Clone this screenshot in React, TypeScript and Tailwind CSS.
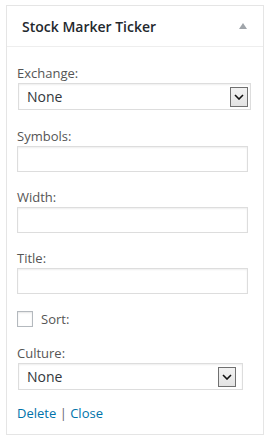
import React from "react";

const font = { fontFamily: '"Open Sans", "Liberation Sans", sans-serif' };

const Chevron: React.FC = () => (
  <svg width="10" height="6" viewBox="0 0 10 6" fill="none">
    <path d="M1 1l4 4 4-4" stroke="#111" strokeWidth="1.6" />
  </svg>
);

const FakeSelect: React.FC<{ width: string; pad: string }> = ({ width, pad }) => (
  <div
    className={`${width} h-[27px] flex items-center justify-between bg-white border border-[#ddd] shadow-[inset_0_1px_2px_rgba(0,0,0,0.07)] pl-[8px] ${pad}`}
  >
    <span className="text-[14px] text-[#32373c]">None</span>
    <div className="w-[18px] h-[20px] flex items-center justify-center border border-[#707070] bg-gradient-to-b from-[#f2f2f2] to-[#e3e3e3]">
      <Chevron />
    </div>
  </div>
);

const TextInput: React.FC = () => (
  <div className="w-[231px] h-[26px] bg-white border border-[#ddd] shadow-[inset_0_1px_2px_rgba(0,0,0,0.07)]" />
);

const Label: React.FC<{ text: string }> = ({ text }) => (
  <div className="text-[13px] leading-[18px] text-[#555] mb-[1px]">{text}</div>
);

export default function App() {
  return (
    <div className="w-[271px] h-[441px] bg-white pt-[5px] pl-[6px]" style={font}>
      <div className="w-[258px] h-[430px] border border-[#e5e5e5] flex flex-col">
        {/* header */}
        <div className="h-[41px] flex items-center justify-between border-b border-[#eee] pl-[15px] pr-[16px]">
          <span className="text-[14px] font-semibold text-[#23282d]">Stock Marker Ticker</span>
          <span className="w-0 h-0 border-l-[4px] border-r-[4px] border-b-[6px] border-l-transparent border-r-transparent border-b-[#a0a5aa]" />
        </div>

        {/* body */}
        <div className="flex flex-col pl-[10px] pt-[17px]">
          <div>
            <Label text="Exchange:" />
            <div className="ml-[1px]">
              <FakeSelect width="w-[233px]" pad="pr-[2px]" />
            </div>
          </div>

          <div className="mt-[17px]">
            <Label text="Symbols:" />
            <TextInput />
          </div>

          <div className="mt-[16px]">
            <Label text="Width:" />
            <TextInput />
          </div>

          <div className="mt-[16px]">
            <Label text="Title:" />
            <TextInput />
          </div>

          <div className="mt-[16px] flex items-center gap-[8px]">
            <div className="w-[16px] h-[16px] border border-[#b4b9be] bg-white shadow-[inset_0_1px_2px_rgba(0,0,0,0.1)]" />
            <span className="text-[13px] leading-[18px] text-[#555]">Sort:</span>
          </div>

          <div className="mt-[16px]">
            <Label text="Culture:" />
            <div className="ml-[1px]">
              <FakeSelect width="w-[225px]" pad="pr-[6px]" />
            </div>
          </div>

          <div className="mt-[14px] text-[13px] leading-[18px]">
            <a className="text-[#0073aa]">Delete</a>
            <span className="text-[#666]"> | </span>
            <a className="text-[#0073aa]">Close</a>
          </div>
        </div>
      </div>
    </div>
  );
}
